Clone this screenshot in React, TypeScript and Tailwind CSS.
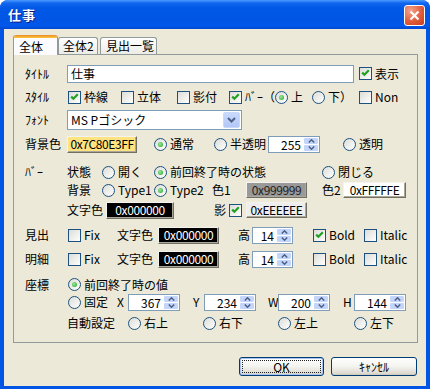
import React from "react";

function CB({ checked = false }: { checked?: boolean }) {
  return (
    <span className="flex-none w-[13px] h-[13px] border border-[#1C5180] bg-linear-to-br from-[#DCDCD7] to-white flex items-center justify-center">
      {checked && (
        <svg width="9" height="9" viewBox="0 0 9 9">
          <path d="M1.2 3.6 L3.4 5.8 L7.8 1.3" stroke="#21A121" strokeWidth="2.2" fill="none" />
        </svg>
      )}
    </span>
  );
}

function RB({ checked = false }: { checked?: boolean }) {
  return (
    <span className="flex-none w-[13px] h-[13px] rounded-full border border-[#1C5180] bg-linear-to-br from-[#DCDCD7] to-white flex items-center justify-center">
      {checked && (
        <span className="w-[5px] h-[5px] rounded-full bg-[radial-gradient(circle_at_40%_40%,#9BE89B,#21A121)]" />
      )}
    </span>
  );
}

function CBL({ checked = false, label, cls = "" }: { checked?: boolean; label: string; cls?: string }) {
  return (
    <span className={`flex-none flex items-center ${cls}`}>
      <CB checked={checked} />
      <span className="ml-[3px] whitespace-nowrap">{label}</span>
    </span>
  );
}

function RBL({ checked = false, label, cls = "" }: { checked?: boolean; label: string; cls?: string }) {
  return (
    <span className={`flex-none flex items-center ${cls}`}>
      <RB checked={checked} />
      <span className="ml-[3px] whitespace-nowrap">{label}</span>
    </span>
  );
}

function ColorBtn({ text, cls }: { text: string; cls: string }) {
  return (
    <span
      className={`flex-none flex items-center justify-center whitespace-nowrap tracking-[-0.4px] border border-t-[#F4F3EE] border-l-[#F4F3EE] border-b-[#716F64] border-r-[#716F64] shadow-[inset_-1px_-1px_0_#ACA899] ${cls}`}
    >
      {text}
    </span>
  );
}

function Spin({ v, cls }: { v: string; cls: string }) {
  return (
    <span className={`flex-none flex h-[17px] border border-[#7F9DB9] bg-white ${cls}`}>
      <span className="flex-1 text-right pr-[2px] leading-[15px]">{v}</span>
      <span className="w-[16px] flex flex-col">
        <span className="h-[7px] flex items-center justify-center rounded-[2px] bg-[#C4D5FC] border border-white border-b-0">
          <svg width="7" height="4" viewBox="0 0 7 4">
            <path d="M0.8 3.5 L3.5 0.8 L6.2 3.5" stroke="#4D6185" strokeWidth="1.5" fill="none" />
          </svg>
        </span>
        <span className="flex-1 flex items-center justify-center rounded-[2px] bg-[#C4D5FC] border border-white">
          <svg width="7" height="4" viewBox="0 0 7 4">
            <path d="M0.8 0.5 L3.5 3.2 L6.2 0.5" stroke="#4D6185" strokeWidth="1.5" fill="none" />
          </svg>
        </span>
      </span>
    </span>
  );
}

function XPButton({ label, def = false }: { label: string; def?: boolean }) {
  return (
    <div
      className={`relative h-[19px] flex items-center justify-center rounded-[3px] border border-[#003C74] bg-linear-to-b from-white via-[#F3F3EF] to-[#D8D4C8] ${
        def ? "w-[85px] shadow-[inset_0_0_0_1px_#A9C3F2]" : "w-[86px] shadow-[inset_0_-1px_0_#D0CBBE]"
      }`}
    >
      {def && <span className="absolute inset-[2px] border border-dotted border-[#222]" />}
      <span className="relative">{label}</span>
    </div>
  );
}

export default function App() {
  return (
    <div className="w-[430px] h-[389px] bg-white font-['Noto_Sans_CJK_JP',sans-serif] text-[12px] leading-[14px] text-black">
      <div className="w-full h-full rounded-t-[8px] bg-[#0055E5] flex flex-col overflow-hidden">
        {/* Title bar */}
        <div className="h-[29px] flex-none flex items-center justify-between pl-[8px] pr-[5px] bg-[linear-gradient(to_bottom,#4A9BFF_0px,#1266EE_3px,#0058E6_8px,#0055E5_20px,#0057EA_26px,#0046CF_29px)]">
          <span className="text-white font-bold text-[13px] tracking-[1px] [text-shadow:1px_1px_0_#0A1883]">仕事</span>
          <div className="mt-[2px] w-[21px] h-[21px] rounded-[3px] border border-white bg-[radial-gradient(circle_at_30%_25%,#F2A48C,#E25C3C_55%,#C53C1C)] flex items-center justify-center">
            <svg width="11" height="11" viewBox="0 0 11 11">
              <path d="M1.5 1.5 L9.5 9.5 M9.5 1.5 L1.5 9.5" stroke="white" strokeWidth="2.2" />
            </svg>
          </div>
        </div>

        {/* Client area */}
        <div className="flex-1 mx-[4px] mb-[3px] bg-[#ECE9D8] flex flex-col">
          {/* Tabs */}
          <div className="flex items-end h-[19px] mt-[6px] ml-[9px] relative z-10">
            <div className="w-[45px] h-[20px] -mb-[1px] flex flex-col rounded-t-[3px] border-x border-[#919B9C] bg-[#FCFCFE] overflow-hidden">
              <div className="h-[3px] flex-none bg-linear-to-b from-[#E68B2C] to-[#FFC83C]" />
              <div className="flex-1 flex items-center pl-[5px]">全体</div>
            </div>
            <div className="w-[40px] h-[17px] flex items-center pl-[4px] rounded-t-[3px] border border-b-0 border-[#919B9C] bg-linear-to-b from-white to-[#ECEBE6]">
              全体2
            </div>
            <div className="w-[57px] h-[17px] ml-[2px] flex items-center pl-[5px] rounded-t-[3px] border border-b-0 border-[#919B9C] bg-linear-to-b from-white to-[#ECEBE6]">
              見出一覧
            </div>
          </div>

          {/* Panel */}
          <div className="w-[405px] h-[289px] ml-[9px] border border-[#919B9C] bg-[#ECE9D8] pl-[11px] pt-[9px] flex flex-col">
            {/* タイトル */}
            <div className="flex items-center h-[19px]">
              <span className="w-[42px] flex-none">ﾀｲﾄﾙ</span>
              <span className="w-[287px] h-[18px] flex-none border border-[#7F9DB9] bg-white flex items-center pl-[3px]">仕事</span>
              <span className="ml-[5px] flex">
                <CBL checked label="表示" />
              </span>
            </div>

            {/* スタイル */}
            <div className="flex items-center h-[18px] mt-[5px]">
              <span className="w-[43px] flex-none">ｽﾀｲﾙ</span>
              <CBL checked label="枠線" cls="w-[53px]" />
              <CBL label="立体" cls="w-[56px]" />
              <CBL label="影付" cls="w-[52px]" />
              <CBL checked label="ﾊﾞｰ（" cls="w-[46px]" />
              <RBL checked label="上" cls="w-[37px]" />
              <RBL label="下）" cls="w-[47px]" />
              <CBL label="Non" />
            </div>

            {/* フォント */}
            <div className="flex items-center h-[20px] mt-[4px]">
              <span className="w-[42px] flex-none">ﾌｫﾝﾄ</span>
              <span className="w-[175px] h-[20px] flex-none border border-[#7F9DB9] bg-white flex">
                <span className="flex-1 flex items-center pl-[3px]">MS Pゴシック</span>
                <span className="w-[17px] m-[1px] rounded-[2px] border border-[#C8D7FA] bg-linear-to-b from-[#C9D9FD] to-[#B3C7F6] flex items-center justify-center">
                  <svg width="9" height="6" viewBox="0 0 9 6">
                    <path d="M1 1 L4.5 4.5 L8 1" stroke="#4D6185" strokeWidth="2" fill="none" />
                  </svg>
                </span>
              </span>
            </div>

            {/* 背景色 */}
            <div className="flex items-center h-[18px] mt-[5px]">
              <span className="w-[42px] flex-none">背景色</span>
              <ColorBtn text="0x7C80E3FF" cls="w-[70px] h-[17px] bg-[#FFE380]" />
              <span className="w-[17px] flex-none" />
              <RBL checked label="通常" cls="w-[60px]" />
              <RBL label="半透明" cls="w-[54px]" />
              <Spin v="255" cls="w-[52px]" />
              <span className="w-[23px] flex-none" />
              <RBL label="透明" />
            </div>

            {/* バー 状態 */}
            <div className="flex items-center h-[18px] mt-[10px]">
              <span className="w-[42px] flex-none">ﾊﾞｰ</span>
              <span className="w-[35px] flex-none">状態</span>
              <RBL label="開く" cls="w-[52px]" />
              <RBL checked label="前回終了時の状態" cls="w-[168px]" />
              <RBL label="閉じる" />
            </div>

            {/* 背景 */}
            <div className="flex items-center h-[18px]">
              <span className="w-[42px] flex-none" />
              <span className="w-[35px] flex-none">背景</span>
              <RBL label="Type1" cls="w-[52px]" />
              <RBL checked label="Type2" cls="w-[58px]" />
              <span className="w-[34px] flex-none">色1</span>
              <ColorBtn text="0x999999" cls="w-[61px] h-[16px] bg-[#999999] text-[#222]" />
              <span className="w-[15px] flex-none" />
              <span className="w-[21px] flex-none">色2</span>
              <ColorBtn text="0xFFFFFE" cls="w-[63px] h-[16px] bg-[#FFFFFE]" />
            </div>

            {/* 文字色 */}
            <div className="flex items-center h-[18px] mt-[2px]">
              <span className="w-[42px] flex-none" />
              <span className="w-[39px] flex-none">文字色</span>
              <ColorBtn text="0x000000" cls="w-[68px] h-[17px] bg-black text-white" />
              <span className="w-[40px] flex-none" />
              <span className="w-[15px] flex-none">影</span>
              <CB checked />
              <span className="w-[4px] flex-none" />
              <ColorBtn text="0xEEEEEE" cls="w-[61px] h-[16px] bg-[#EEEEEE]" />
            </div>

            {/* 見出 */}
            <div className="flex items-center h-[18px] mt-[7px]">
              <span className="w-[43px] flex-none">見出</span>
              <CBL label="Fix" cls="w-[49px]" />
              <span className="w-[41px] flex-none">文字色</span>
              <ColorBtn text="0x000000" cls="w-[61px] h-[17px] bg-black text-white" />
              <span className="w-[19px] flex-none" />
              <span className="w-[14px] flex-none">高</span>
              <Spin v="14" cls="w-[41px]" />
              <span className="w-[20px] flex-none" />
              <CBL checked label="Bold" cls="w-[51px]" />
              <CBL label="Italic" />
            </div>

            {/* 明細 */}
            <div className="flex items-center h-[18px] mt-[6px]">
              <span className="w-[43px] flex-none">明細</span>
              <CBL label="Fix" cls="w-[49px]" />
              <span className="w-[41px] flex-none">文字色</span>
              <ColorBtn text="0x000000" cls="w-[61px] h-[17px] bg-black text-white" />
              <span className="w-[19px] flex-none" />
              <span className="w-[14px] flex-none">高</span>
              <Spin v="14" cls="w-[41px]" />
              <span className="w-[20px] flex-none" />
              <CBL label="Bold" cls="w-[51px]" />
              <CBL label="Italic" />
            </div>

            {/* 座標 */}
            <div className="flex items-center h-[17px] mt-[8px]">
              <span className="w-[43px] flex-none">座標</span>
              <RBL checked label="前回終了時の値" />
            </div>

            {/* 固定 */}
            <div className="flex items-center h-[18px]">
              <span className="w-[43px] flex-none" />
              <RBL label="固定" cls="w-[49px]" />
              <span className="w-[11px] flex-none">X</span>
              <Spin v="367" cls="w-[52px]" />
              <span className="w-[13px] flex-none" />
              <span className="w-[11px] flex-none">Y</span>
              <Spin v="234" cls="w-[52px]" />
              <span className="w-[12px] flex-none" />
              <span className="w-[10px] flex-none">W</span>
              <Spin v="200" cls="w-[52px]" />
              <span className="w-[13px] flex-none" />
              <span className="w-[11px] flex-none">H</span>
              <Spin v="144" cls="w-[52px]" />
            </div>

            {/* 自動設定 */}
            <div className="flex items-center h-[18px] mt-[3px]">
              <span className="w-[42px] flex-none" />
              <span className="w-[61px] flex-none">自動設定</span>
              <RBL label="右上" cls="w-[75px]" />
              <RBL label="右下" cls="w-[75px]" />
              <RBL label="左上" cls="w-[76px]" />
              <RBL label="左下" />
            </div>
          </div>

          {/* Buttons */}
          <div className="flex justify-end gap-[7px] mt-[14px] pr-[9px]">
            <XPButton label="OK" def />
            <XPButton label="ｷｬﾝｾﾙ" />
          </div>
        </div>
      </div>
    </div>
  );
}
